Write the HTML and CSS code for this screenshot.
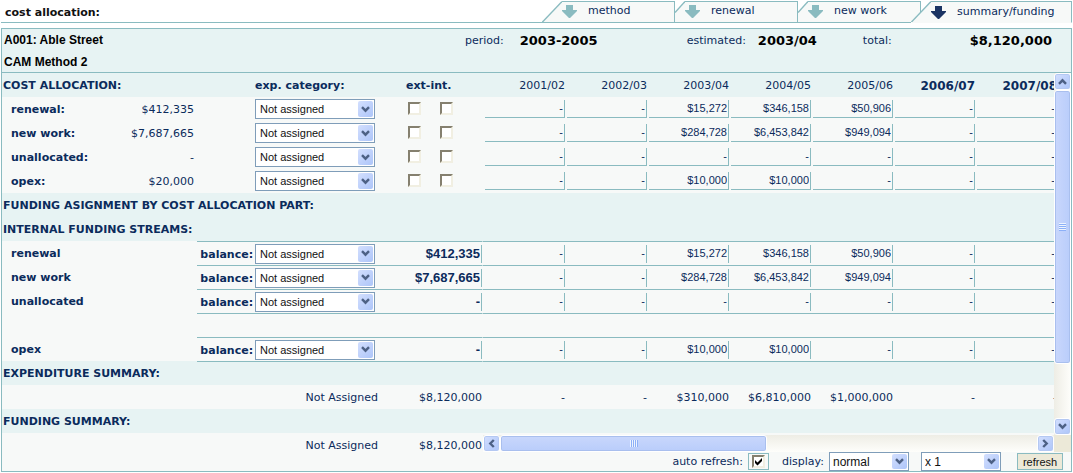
FILE: index.html
```html
<!DOCTYPE html>
<html lang="en">
<head>
<meta charset="utf-8">
<title>Cost allocation</title>
<link rel="stylesheet" href="styles.css">
</head>
<body>
<svg class="defs" width="0" height="0" aria-hidden="true">
  <symbol id="down-block" viewBox="0 0 15 13"><path d="M4 0h7v5h4v1L8 13H7L0 6V5h4z" fill="currentColor"/></symbol>
  <symbol id="chevron" viewBox="0 0 9 7"><path d="M1 1.2 4.5 4.7 8 1.2" fill="none" stroke="currentColor" stroke-width="2.4"/></symbol>
</svg>

<header class="topbar">
  <h1 class="page-title">cost allocation:</h1>
  <nav class="tabs">
    <a class="tab" href="#method"><svg class="slant" width="20" height="22"><path d="M0 22 20 0v22z" class="fill"/><path d="M0 21.5 20 .5" class="edge"/></svg><span class="tab-body"><svg class="mark" width="15" height="13"><use href="#down-block"/></svg>method</span></a>
    <a class="tab" href="#renewal"><svg class="slant" width="10" height="22"><path d="M0 11 10 0v22H0z" class="fill"/><path d="M0 11.5 10 .5" class="edge"/></svg><span class="tab-body"><svg class="mark" width="15" height="13"><use href="#down-block"/></svg>renewal</span></a>
    <a class="tab" href="#new-work"><svg class="slant" width="10" height="22"><path d="M0 11 10 0v22H0z" class="fill"/><path d="M0 11.5 10 .5" class="edge"/></svg><span class="tab-body"><svg class="mark" width="15" height="13"><use href="#down-block"/></svg>new work</span></a>
    <a class="tab current" href="#summary" aria-current="page"><svg class="slant" width="20" height="22"><path d="M0 22 20 0v22z" class="fill"/><path d="M0 21.5 20 .5" class="edge"/></svg><span class="tab-body"><svg class="mark" width="15" height="13"><use href="#down-block"/></svg>summary/funding</span></a>
  </nav>
</header>

<main class="panel">
  <section class="summary">
    <div class="project"><div>A001: Able Street</div><div>CAM Method 2</div></div>
    <dl class="facts">
      <dt>period:</dt><dd class="period">2003-2005</dd>
      <dt>estimated:</dt><dd class="estimated">2003/04</dd>
      <dt>total:</dt><dd class="total">$8,120,000</dd>
    </dl>
  </section>

  <div class="sheet">
    <table class="grid frozen">
      <colgroup><col class="c-label"><col class="c-sum"><col class="c-bal"><col class="c-cat"><col class="c-amt"></colgroup>
      <tbody id="frozen"></tbody>
    </table>
    <div class="scroll-area">
      <div class="viewport">
        <table class="grid years"><tbody id="years"></tbody></table>
      </div>
      <div class="bar vertical">
        <button type="button" class="bar-btn up" aria-label="Scroll up"><svg width="9" height="7"><use href="#chevron"/></svg></button>
        <div class="thumb"><i class="grip"></i></div><div class="track"></div>
        <button type="button" class="bar-btn" aria-label="Scroll down"><svg width="9" height="7"><use href="#chevron"/></svg></button>
      </div>
      <div class="bar horizontal">
        <button type="button" class="bar-btn left" aria-label="Scroll left"><svg width="9" height="7"><use href="#chevron"/></svg></button>
        <div class="thumb"><i class="grip"></i></div><div class="track"></div>
        <button type="button" class="bar-btn right" aria-label="Scroll right"><svg width="9" height="7"><use href="#chevron"/></svg></button>
      </div>
      <div class="corner"></div>
      <form class="controls">
        <label for="auto">auto refresh:</label>
        <span class="tick-box"><input type="checkbox" class="check" id="auto" checked><svg class="tick" width="9" height="9" viewBox="0 0 9 9"><path d="M1 3v3l2.500 2.500L8 4V1L3.500 5.500z"/></svg></span>
        <label for="display">display:</label>
        <span class="select"><select id="display"><option>normal</option></select><span class="arrow"><svg width="9" height="7"><use href="#chevron"/></svg></span></span>
        <span class="select scale"><select aria-label="scale"><option>x 1</option></select><span class="arrow"><svg width="9" height="7"><use href="#chevron"/></svg></span></span>
        <button type="button" class="refresh">refresh</button>
      </form>
    </div>
  </div>
</main>
<script src="app.js"></script>
</body>
</html>
```

FILE: styles.css
```css
:root {
  --line: #8abbc0;
  --band: #e7f3f3;
  --plain: #f7f9f8;
  --navy: #0b2b5c;
}
* { box-sizing: border-box; }
body {
  margin: 0;
  padding: 1px 1px 0;
  background: #fff;
  color: var(--navy);
  font: 11px/14px "DejaVu Sans", sans-serif;
}
.defs { position: absolute; }
svg { display: block; }

.topbar {
  display: flex;
  justify-content: space-between;
  height: 22px;
}
.page-title {
  flex: 1;
  margin: 0;
  padding: 5px 4px 0;
  border-bottom: 1px solid var(--line);
  color: #111;
  font-size: 11px;
  line-height: 14px;
}
.tabs { display: flex; }
.tab {
  display: flex;
  color: var(--navy);
  text-decoration: none;
}
.slant { border-bottom: 1px solid var(--line); }
.fill { fill: var(--plain); }
.edge { fill: none; stroke: var(--line); stroke-width: 1.4; }
.tab-body {
  display: flex;
  gap: 11px;
  width: 113px;
  padding-top: 2px;
  border: solid var(--line);
  border-width: 1px 1px 1px 0;
  background: var(--plain);
}
.mark { margin-top: 1px; color: var(--line); }
.current { margin-left: -10px; }
.current .tab-body { width: 141px; padding-top: 3px; border-bottom-color: var(--plain); }
.current .slant { border-bottom-color: var(--plain); }
.current .mark { color: #1b3463; }

.panel {
  margin-top: 5px;
  border: 1px solid var(--line);
  background: var(--plain);
}
.summary {
  display: flex;
  height: 44px;
  border-bottom: 1px solid var(--line);
  background: var(--band);
}
.project {
  width: 463px;
  padding-left: 2px;
  color: #000;
  font: bold 12px/22px "Liberation Sans", sans-serif;
}
.facts {
  display: flex;
  flex: 1;
  margin: 0;
  padding: 4px 19px 0 0;
  line-height: 16px;
}
.facts dt { line-height: 15px; }
.facts dd {
  margin: 0;
  color: #000;
  font-size: 13px;
  font-weight: bold;
}
.period { width: 183px; padding-left: 16px; }
.estimated { width: 117px; padding-left: 12px; }
.facts .total { margin-left: auto; }

.sheet {
  display: grid;
  grid-template-columns: 481px minmax(0, 1fr);
  align-items: start;
}
.grid { table-layout: fixed; border-collapse: separate; border-spacing: 0; }
.grid tr { height: 24px; }
.grid th, .grid td { height: 24px; padding: 0; white-space: nowrap; text-align: right; }
.grid th, .grid .sum, .grid .plain { padding-top: 2px; font-weight: bold; }
.grid .sum, .grid .plain { font-weight: normal; }
.band { background: var(--band); }
.frozen { width: 481px; }
.frozen tr > :last-child { border-right: 1px solid transparent; }
.c-label { width: 98px; }
.c-sum { width: 97px; }
.c-bal { width: 58px; }
.c-cat { width: 128px; }
.c-amt { width: 100px; }
.grid .name { padding-left: 9px; text-align: left; }
.grid .heading { padding-left: 1px; text-align: left; }
.grid .start { text-align: left; }
.grid .sum { padding-right: 3px; }
.grid .balance { padding-right: 2px; }
.grid .caption { padding-right: 5px; }
.grid .ext { padding-left: 23px; text-align: left; }
.grid .ruled { border-top: 1px solid var(--line); }
.checks { display: flex; gap: 19px; height: 15px; padding-left: 25px; }

.years { width: 574px; }
.years .strong { font-size: 12px; }
.grid.years th { font-weight: normal; }
.grid.years th.strong { font-weight: bold; }

.cell {
  display: block;
  width: 80px;
  height: 18px;
  margin-left: 2px;
  padding: 0 1px 1px;
  border: 0 solid var(--line);
  border-width: 0 1px 1px 0;
  background: transparent;
  color: var(--navy);
  font: 11px/14px "Liberation Sans", sans-serif;
  text-align: right;
}
.ruled .cell { border-bottom-width: 0; }
.cell.amount { width: 97px; font-size: 13px; font-weight: bold; }

.select { position: relative; display: block; width: 120px; height: 20px; }
.select select {
  display: block;
  width: 100%;
  height: 20px;
  padding: 0 20px 0 4px;
  border: 1px solid #7f9db9;
  border-radius: 0;
  background: #fff;
  color: #111;
  font: 11px/16px "Liberation Sans", sans-serif;
  appearance: none;
}
.arrow {
  position: absolute;
  top: 2px;
  right: 2px;
  display: flex;
  align-items: center;
  justify-content: center;
  width: 15px;
  height: 16px;
  border-radius: 2px;
  background: linear-gradient(135deg, #d3dffe, #adc5f9);
  color: #4d6185;
  pointer-events: none;
}
.check {
  display: block;
  width: 13px;
  height: 13px;
  margin: 0;
  border: 2px solid;
  border-color: #85806f #f1efe2 #f1efe2 #85806f;
  background: #fff;
  appearance: none;
}

.scroll-area {
  display: grid;
  grid-template-columns: minmax(0, 1fr) 17px;
}
.viewport { overflow: hidden; padding-bottom: 2px; }
.bar {
  display: flex;
  background: linear-gradient(90deg, #eeede5, #fefefb);
}
.vertical { flex-direction: column; }
.horizontal { height: 17px; background: linear-gradient(#eeede5, #fefefb); }
.bar-btn {
  display: flex;
  flex: none;
  align-items: center;
  justify-content: center;
  width: 17px;
  height: 17px;
  padding: 0;
  border: 1px solid #fff;
  border-radius: 3px;
  background: linear-gradient(135deg, #d3dffe, #adc5f9);
  box-shadow: inset 0 0 0 1px #b4c8f2;
  color: #4d6185;
}
.up svg { transform: rotate(180deg); }
.left svg { transform: rotate(90deg); }
.right svg { transform: rotate(-90deg); }
.thumb {
  display: flex;
  align-items: center;
  justify-content: center;
  border: 1px solid #fff;
  border-radius: 3px;
  background: linear-gradient(90deg, #c9d7fc, #b9cdfb);
  box-shadow: inset 0 0 0 1px #a9bfee;
}
.vertical .thumb { flex: 274; }
.vertical .track { flex: 54; }
.horizontal .thumb { flex: 266; background: linear-gradient(#c9d7fc, #b9cdfb); }
.horizontal .track { flex: 271; }
.grip { width: 7px; height: 8px; background: repeating-linear-gradient(#eef4fe 0 1px, #8cb0f8 1px 2px); }
.horizontal .grip { width: 8px; height: 7px; background: repeating-linear-gradient(90deg, #eef4fe 0 1px, #8cb0f8 1px 2px); }
.corner { background: #ece9d8; }

.controls {
  grid-column: 1 / -1;
  display: flex;
  align-items: center;
  justify-content: flex-end;
  height: 19px;
  padding-right: 8px;
}
.tick-box {
  position: relative;
  margin: 0 13px 0 5px;
  padding: 1px 3px;
  border: 1px solid var(--line);
}
.tick { position: absolute; top: 3px; left: 5px; pointer-events: none; }
.controls .select { width: 80px; height: 19px; margin-left: 5px; }
.controls .select select { height: 19px; font-size: 12px; padding-left: 3px; }
.controls .arrow { height: 15px; }
.controls .scale { margin-left: 12px; }
.refresh {
  width: 46px;
  height: 17px;
  margin-left: 16px;
  padding: 0;
  border: 1px solid var(--line);
  background: #ece9d8;
  color: #111;
  font: 11px/14px "Liberation Sans", sans-serif;
}
```

FILE: app.js
```js
const NONE = ["-", "-", "-", "-", "-", "-", "-"];
const RENEWAL = ["-", "-", "$15,272", "$346,158", "$50,906", "-", "-"];
const NEW_WORK = ["-", "-", "$284,728", "$6,453,842", "$949,094", "-", "-"];
const OPEX = ["-", "-", "$10,000", "$10,000", "-", "-", "-"];
const YEARS = ["2001/02", "2002/03", "2003/04", "2004/05", "2005/06", "2006/07", "2007/08"];

const rows = [
  { type: "columns", name: "COST ALLOCATION:" },
  { type: "cost", name: "renewal:", sum: "$412,335", values: RENEWAL },
  { type: "cost", name: "new work:", sum: "$7,687,665", values: NEW_WORK },
  { type: "cost", name: "unallocated:", sum: "-", values: NONE },
  { type: "cost", name: "opex:", sum: "$20,000", values: OPEX },
  { type: "heading", name: "FUNDING ASIGNMENT BY COST ALLOCATION PART:" },
  { type: "heading", name: "INTERNAL FUNDING STREAMS:" },
  { type: "stream", name: "renewal", sum: "$412,335", values: RENEWAL },
  { type: "stream", name: "new work", sum: "$7,687,665", values: NEW_WORK },
  { type: "stream", name: "unallocated", sum: "-", values: NONE },
  { type: "blank" },
  { type: "stream", name: "opex", sum: "-", values: OPEX },
  { type: "heading", name: "EXPENDITURE SUMMARY:", ruled: true },
  { type: "total", sum: "$8,120,000", values: ["-", "-", "$310,000", "$6,810,000", "$1,000,000", "-", "-"] },
  { type: "heading", name: "FUNDING SUMMARY:" },
  { type: "total", sum: "$8,120,000" }
];

const select = (label) =>
  `<span class="select"><select aria-label="${label} category"><option>Not assigned</option></select>` +
  `<span class="arrow"><svg width="9" height="7"><use href="#chevron"/></svg></span></span>`;
const box = (label) => `<input type="checkbox" class="check" aria-label="${label}">`;
const field = (value, label, extra = "") =>
  `<input type="text" class="cell ${extra}" value="${value}" aria-label="${label}">`;

const frozen = {
  columns: (r) => `<tr class="band"><th class="heading" colspan="3">${r.name}</th><th class="start">exp. category:</th><th class="ext">ext-int.</th></tr>`,
  cost: (r) => `<tr><th class="name">${r.name}</th><td class="sum">${r.sum}</td><td></td><td>${select(r.name)}</td>` +
    `<td><div class="checks">${box(r.name + " external")}${box(r.name + " internal")}</div></td></tr>`,
  heading: (r) => r.ruled
    ? `<tr class="band"><th class="heading" colspan="2">${r.name}</th><td class="ruled" colspan="3"></td></tr>`
    : `<tr class="band"><th class="heading" colspan="5">${r.name}</th></tr>`,
  stream: (r) => `<tr><th class="name" colspan="2">${r.name}</th><th class="balance ruled">balance:</th>` +
    `<td class="ruled">${select(r.name)}</td><td class="ruled">${field(r.sum, r.name + " balance", "amount")}</td></tr>`,
  blank: () => `<tr><td colspan="2"></td><td class="ruled" colspan="3"></td></tr>`,
  total: (r) => `<tr><td colspan="2"></td><td class="caption plain" colspan="2">Not Assigned</td><td class="plain">${r.sum}</td></tr>`
};

const yearly = {
  columns: () => `<tr class="band">${YEARS.map((y, i) => `<th class="${i > 4 ? "strong" : ""}">${y}</th>`).join("")}</tr>`,
  cost: (r) => `<tr>${r.values.map((v, i) => `<td>${field(v, r.name + " " + YEARS[i])}</td>`).join("")}</tr>`,
  heading: (r) => `<tr class="band"><td colspan="7" class="${r.ruled ? "ruled" : ""}"></td></tr>`,
  stream: (r) => `<tr>${r.values.map((v, i) => `<td class="ruled">${field(v, r.name + " " + YEARS[i])}</td>`).join("")}</tr>`,
  blank: () => `<tr><td colspan="7" class="ruled"></td></tr>`,
  total: (r) => r.values ? `<tr>${r.values.map((v) => `<td class="plain">${v}</td>`).join("")}</tr>` : ""
};

document.getElementById("frozen").innerHTML = rows.map((r) => frozen[r.type](r)).join("");
document.getElementById("years").innerHTML = rows.map((r) => yearly[r.type](r)).join("");
```
